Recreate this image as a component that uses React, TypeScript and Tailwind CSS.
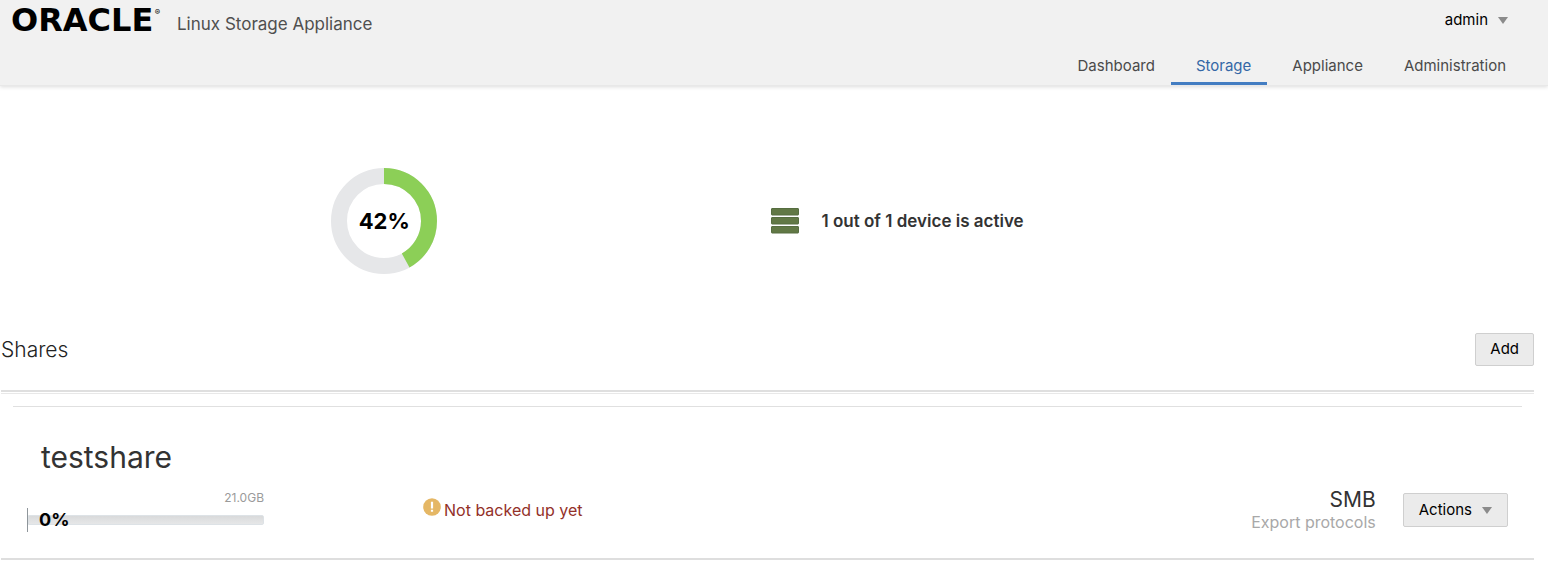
import React from 'react';
import clsx from 'clsx';

interface NavItem {
  label: string;
  href: string;
}

interface Share {
  name: string;
  usedPercent: number;
  capacity: string;
  backupStatus: string;
  protocol: string;
}

const navItems: NavItem[] = [
  { label: 'Dashboard', href: '#dashboard' },
  { label: 'Storage', href: '#storage' },
  { label: 'Appliance', href: '#appliance' },
  { label: 'Administration', href: '#administration' },
];

const shares: Share[] = [
  {
    name: 'testshare',
    usedPercent: 0,
    capacity: '21.0GB',
    backupStatus: 'Not backed up yet',
    protocol: 'SMB',
  },
];

const CaretDown: React.FC = () => (
  <svg className="w-[10px] h-[7px] text-[#8b8b8b]" viewBox="0 0 10 7" aria-hidden="true">
    <path d="M0 0h10L5 7z" fill="currentColor" />
  </svg>
);

const Header: React.FC<{ active: string }> = ({ active }) => (
  <header className="relative flex justify-between h-[86px] bg-[#f1f1f1] border-b border-[#e8e8e8] shadow-[0_1px_4px_rgba(0,0,0,0.14)]">
    <div className="flex items-start pl-[11px] pt-1">
      <a href="#home" className="flex items-start justify-between w-[149px] text-black" aria-label="Oracle">
        <span className="font-['DejaVu_Sans'] font-bold text-[32px] leading-8">ORACLE</span>
        <span className="text-[8px] leading-4">®</span>
      </a>
      <h1 className="pl-[17px] pt-2 text-[17px] leading-6 text-[#4f4f4f]">Linux Storage Appliance</h1>
    </div>

    <div className="flex flex-col items-end justify-between">
      <button type="button" className="flex items-center gap-[10px] pt-2 pr-10 text-[15px] leading-6 text-black">
        admin
        <CaretDown />
      </button>
      <nav className="flex pr-[26px]">
        {navItems.map(item => (
          <a
            key={item.label}
            href={item.href}
            className={clsx(
              'pl-[25px] pr-4 pb-[6px] text-[15px] leading-5 border-b-3',
              item.label === active ? 'text-[#3467a6] border-[#437dc2]' : 'text-[#4a4a4a] border-transparent'
            )}
          >
            {item.label}
          </a>
        ))}
      </nav>
    </div>
  </header>
);

const UsageDonut: React.FC<{ percent: number }> = ({ percent }) => (
  <div className="grid place-items-center">
    <svg className="col-start-1 row-start-1 w-[106px] h-[106px] -rotate-90" viewBox="0 0 106 106" aria-hidden="true">
      <circle cx="53" cy="53" r="45" fill="none" stroke="#e6e7e9" strokeWidth="16" />
      <circle
        cx="53"
        cy="53"
        r="45"
        fill="none"
        stroke="#8ccf57"
        strokeWidth="16"
        pathLength="100"
        strokeDasharray={`${percent} 100`}
      />
    </svg>
    <span className="col-start-1 row-start-1 text-[22px] leading-7 font-bold text-black">{percent}%</span>
  </div>
);

const DeviceStack: React.FC = () => (
  <svg className="w-7 h-[26px]" viewBox="0 0 28 26" aria-hidden="true">
    {[0.5, 9.5, 18.5].map(y => (
      <rect key={y} x="0.5" y={y} width="27" height="6.5" rx="0.5" fill="#617845" stroke="#566d40" />
    ))}
  </svg>
);

const WarningIcon: React.FC = () => (
  <svg className="w-[18px] h-[18px]" viewBox="0 0 18 18" aria-hidden="true">
    <circle cx="9" cy="9" r="8.8" fill="#e5b765" />
    <path d="M7.9 3.8h2.2v6.6H7.9zM7.9 11.7h2.2v2.1H7.9z" fill="#fff" />
  </svg>
);

const ShareRow: React.FC<{ share: Share }> = ({ share }) => (
  <li className="mx-3 pt-[35px] px-[14px] pb-[26px] border-t border-[#e0e0e0]">
    <h3 className="pl-[14px] text-[30px] leading-[30px] text-[#333]">{share.name}</h3>
    <div className="flex items-start justify-between pt-4">
      <div className="flex">
        <div className="w-[237px]">
          <div className="pt-0.5 pb-0.5 text-right text-[12px] leading-4 text-[#9a9a9a]">{share.capacity}</div>
          <div className="grid items-center border-l border-[#8f969b]">
            <div className="col-start-1 row-start-1 h-[10px] rounded-r-xs border border-[#dde2e6] bg-linear-to-b from-[#d9dadb] to-[#e6e7e8]">
              <div className="h-full bg-[#8ccf57]" style={{ width: `${share.usedPercent}%` }} />
            </div>
            <span className="col-start-1 row-start-1 pl-[11px] text-[18px] leading-6 font-bold text-black">
              {share.usedPercent}%
            </span>
          </div>
        </div>
        <div className="flex items-start gap-[3px] pt-[10px] pl-[159px]">
          <WarningIcon />
          <span className="text-[16px] leading-6 text-[#933129]">{share.backupStatus}</span>
        </div>
      </div>

      <div className="flex items-center gap-[27px]">
        <div className="text-right">
          <div className="text-[21px] leading-6 text-[#333]">{share.protocol}</div>
          <div className="text-[16px] leading-5 text-[#a8a8a8]">Export protocols</div>
        </div>
        <button
          type="button"
          className="flex items-center gap-[10px] h-[34px] px-[15px] rounded-xs border border-[#cfcfcf] bg-[#ebebeb] text-[15px] text-black"
        >
          Actions
          <CaretDown />
        </button>
      </div>
    </div>
  </li>
);

export default function App() {
  return (
    <div className="min-h-screen bg-white font-[Inter,sans-serif]">
      <Header active="Storage" />

      <main className="pl-px pr-[14px]">
        <section className="grid grid-cols-2 items-center pt-[82px] pb-[59px]">
          <UsageDonut percent={42} />
          <div className="flex items-center gap-[23px] pl-[3px]">
            <DeviceStack />
            <p className="text-[17px] leading-6 font-semibold text-[#333]">1 out of 1 device is active</p>
          </div>
        </section>

        <section>
          <div className="flex items-center justify-between pb-6">
            <h2 className="text-[21px] leading-7 font-light text-[#222]">Shares</h2>
            <button
              type="button"
              className="h-[33px] px-[14px] rounded-xs border border-[#cfcfcf] bg-[#ebebeb] text-[15px] text-black"
            >
              Add
            </button>
          </div>
          <div className="h-1 border-t-2 border-b border-t-[#dfdfdf] border-b-[#e8e8e8]" />
          <ul className="pt-3 border-b-2 border-[#dedede]">
            {shares.map(share => (
              <ShareRow key={share.name} share={share} />
            ))}
          </ul>
        </section>
      </main>
    </div>
  );
}
